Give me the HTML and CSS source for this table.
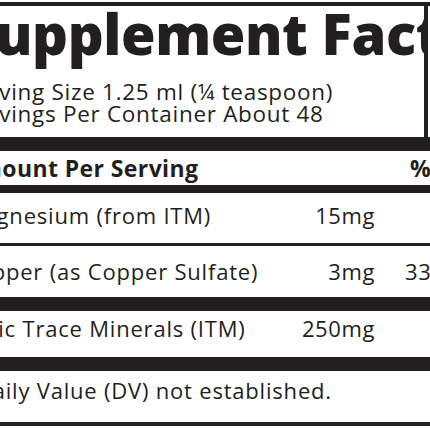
FILE: index.html
```html
<!DOCTYPE html>
<html>
<head>
<meta charset="utf-8">
<link rel="stylesheet" href="styles.css">
</head>
<body>
<div class="label">
  <div class="rule rule-top"></div>
  <div class="header">
    <h1 class="title">Supplement Facts</h1>
    <p class="serving serving-first">Serving Size 1.25 ml (¼ teaspoon)</p>
    <p class="serving">Servings Per Container About 48</p>
  </div>
  <div class="bar bar-thick"></div>
  <div class="row row-head">
    <span class="name">Amount Per Serving</span>
    <span class="amt"></span>
    <span class="dv">%DV</span>
  </div>
  <div class="bar bar-medium"></div>
  <div class="row row-mg">
    <span class="name">Magnesium (from ITM)</span>
    <span class="amt">15mg</span>
    <span class="dv">4%</span>
  </div>
  <div class="rule rule-thin"></div>
  <div class="row row-cu">
    <span class="name">Copper (as Copper Sulfate)</span>
    <span class="amt">3mg</span>
    <span class="dv">333%</span>
  </div>
  <div class="bar bar-thick"></div>
  <div class="row row-itm">
    <span class="name">Ionic Trace Minerals (ITM)</span>
    <span class="amt">250mg</span>
    <span class="dv">*</span>
  </div>
  <div class="bar bar-thick"></div>
  <div class="row row-foot">
    <span class="name">*Daily Value (DV) not established.</span>
  </div>
  <div class="rule rule-bottom"></div>
</div>
</body>
</html>
```

FILE: styles.css
```css
html, body {
  margin: 0;
  padding: 0;
  background: #ffffff;
  overflow: hidden;
}

body {
  font-family: "Open Sans", "Noto Sans", sans-serif;
  color: #231f20;
  width: 430px;
  height: 430px;
}

.label {
  width: 501px;
  margin-left: -37px;
  padding-top: 2px;
}

.rule-top {
  height: 4px;
}

.header {
  width: 465px;
  height: 131px;
  box-sizing: border-box;
  border-right: 4px solid #231f20;
  overflow: hidden;
  white-space: nowrap;
}

.title {
  margin: 0;
  padding-top: 2px;
  font-size: 56px;
  font-weight: 800;
  line-height: 50px;
  letter-spacing: -0.4px;
}

.serving {
  margin: 0;
  font-size: 22.5px;
  line-height: 22px;
  letter-spacing: 0.7px;
}

.serving-first {
  margin-top: 23px;
}

.bar,
.rule {
  background: #231f20;
}

.bar-thick {
  height: 14px;
}

.bar-medium {
  height: 8px;
}

.rule-thin {
  height: 3px;
}

.rule-bottom {
  height: 4px;
}

.row {
  display: grid;
  grid-template-columns: 1fr 100px 89px;
  align-items: start;
  box-sizing: border-box;
  font-size: 22px;
  line-height: 30px;
  letter-spacing: 0.8px;
  white-space: nowrap;
}

.row .amt,
.row .dv {
  text-align: right;
}

.row .amt {
  letter-spacing: 0.6px;
}

.row-head {
  height: 34px;
  padding-top: 2px;
  font-size: 23px;
  font-weight: 700;
  letter-spacing: 0.4px;
}

.row-mg {
  height: 50px;
  padding-top: 7px;
}

.row-cu {
  height: 51px;
  padding-top: 10px;
}

.row-itm {
  height: 46px;
  padding-top: 2px;
}

.row-foot {
  height: 51px;
  padding-top: 4px;
}
```
